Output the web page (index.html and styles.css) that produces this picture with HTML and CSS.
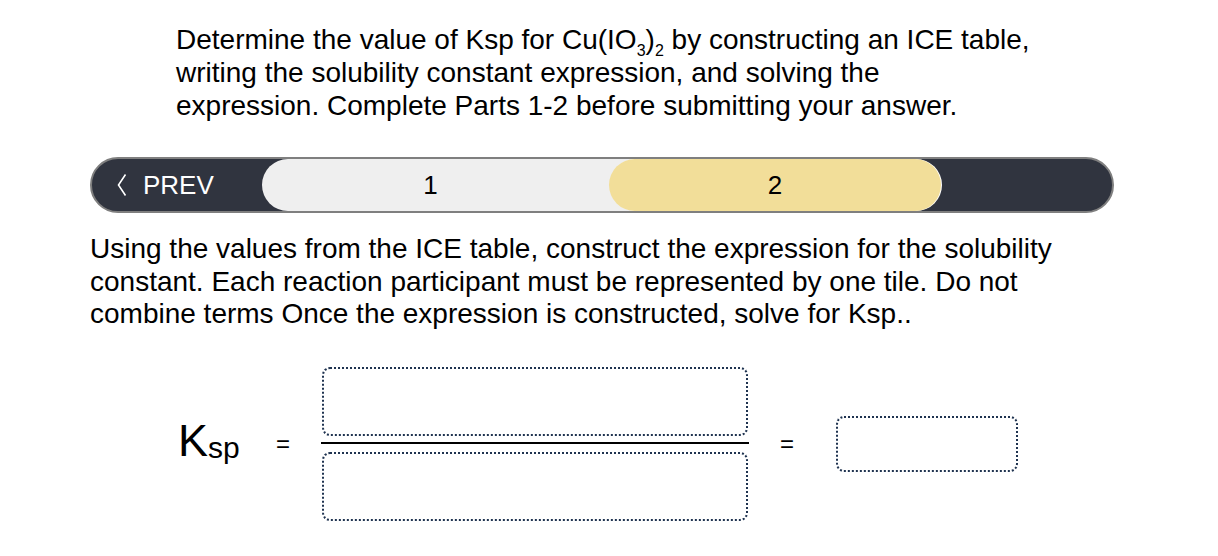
FILE: index.html
```html
<!DOCTYPE html>
<html>
<head>
<meta charset="utf-8">
<link rel="stylesheet" href="styles.css">
</head>
<body>
<div class="page">
  <p class="intro">Determine the value of Ksp for Cu(IO<sub>3</sub>)<sub>2</sub> by constructing an ICE table, writing the solubility constant expression, and solving the<br>expression. Complete Parts 1-2 before submitting your answer.</p>

  <div class="nav">
    <div class="prev">
      <svg class="chev" width="10" height="24" viewBox="0 0 10 24"><polyline points="8.5,1.5 1.5,12 8.5,22.5" fill="none" stroke="#ffffff" stroke-width="1.6"/></svg>
      <span>PREV</span>
    </div>
    <div class="track">
      <div class="step">1</div>
      <div class="step active">2</div>
    </div>
    <div class="rest"></div>
  </div>

  <p class="instr">Using the values from the ICE table, construct the expression for the solubility constant. Each reaction participant must be represented by one tile. Do not combine terms Once the expression is constructed, solve for Ksp..</p>

  <div class="equation">
    <div class="ksp">K<span class="sp">sp</span></div>
    <div class="eq">=</div>
    <div class="fraction">
      <div class="tile"></div>
      <div class="bar"></div>
      <div class="tile"></div>
    </div>
    <div class="eq eq2">=</div>
    <div class="answer"></div>
  </div>
</div>
</body>
</html>
```

FILE: styles.css
```css
* { box-sizing: border-box; }
html, body { margin: 0; padding: 0; background: #ffffff; }
body {
  font-family: "Liberation Sans", Arial, Helvetica, sans-serif;
  color: #000;
}
.page {
  padding: 23px 0 0 90px;
  width: 1218px;
}
.intro {
  margin: 0 0 0 86px;
  width: 870px;
  font-size: 28px;
  line-height: 33px;
}
.intro sub {
  font-size: 16px;
  line-height: 0;
  vertical-align: -7px;
}
.nav {
  margin-top: 35px;
  width: 1024px;
  height: 56px;
  display: flex;
  background: #30343f;
  border: 2px solid #7f7f7f;
  border-radius: 28px;
  overflow: hidden;
}
.prev {
  width: 170px;
  display: flex;
  align-items: center;
  padding-left: 25px;
  color: #ffffff;
  font-size: 26px;
}
.chev { margin-right: 16px; }
.track {
  width: 679px;
  display: flex;
  background: linear-gradient(to right, #efefef 372px, transparent 372px);
  border-radius: 26px 0 0 26px;
}
.step {
  display: flex;
  align-items: center;
  justify-content: center;
  font-size: 26px;
  color: #000;
}
.step:first-child { width: 347px; padding-right: 10px; }
.step.active {
  width: 332px;
  background: #f2de99;
  border-radius: 26px;
  box-shadow: 1px 0 0 #ffffff;
}
.rest { flex: 1; }
.instr {
  margin: 20px 0 0 0;
  width: 1000px;
  font-size: 28px;
  line-height: 32.5px;
}
.equation {
  margin-top: 36px;
  display: flex;
  align-items: center;
  padding-left: 88px;
}
.ksp {
  font-size: 45px;
  line-height: 1;
  width: 98px;
  margin-bottom: 6px;
}
.ksp .sp { font-size: 30px; vertical-align: -2px; }
.eq {
  font-size: 24px;
  width: 45px;
}
.fraction {
  width: 428px;
  display: flex;
  flex-direction: column;
  align-items: center;
}
.tile {
  width: 426px;
  height: 69px;
  border: 2px dotted #1f3350;
  border-radius: 8px;
}
.bar {
  width: 428px;
  height: 2px;
  background: #000;
  margin: 6px 0 8px;
}
.eq2 { margin-left: 31px; width: 56px; }
.answer {
  width: 182px;
  height: 56px;
  border: 2px dotted #1f3350;
  border-radius: 8px;
}
```
